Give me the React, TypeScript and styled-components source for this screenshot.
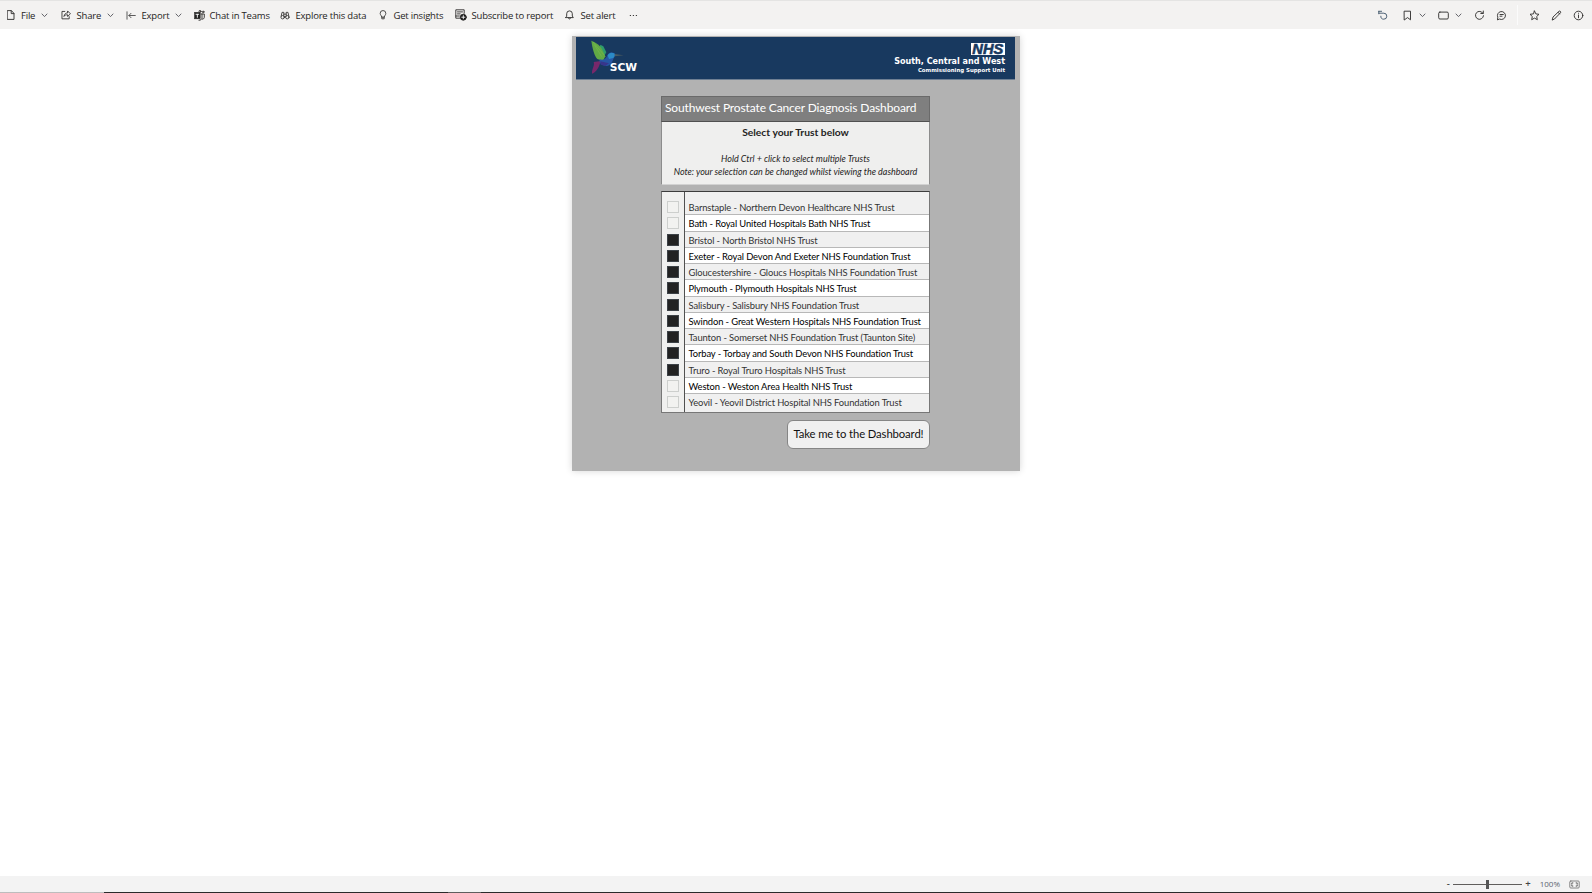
import React from 'react';
import styled, { createGlobalStyle, css } from 'styled-components';

const GlobalStyle = createGlobalStyle`
  * { box-sizing: border-box; }
  html, body { margin: 0; padding: 0; }
  body { background: #fff; color: #252423; overflow: hidden; }
`;

const ui = css`
  font-family: 'Open Sans', 'Noto Sans', sans-serif;
  font-size: 9.5px;
  letter-spacing: -0.2px;
`;

const Page = styled.div`
  width: 100%;
  height: 100vh;
  display: flex;
  flex-direction: column;
`;

const Toolbar = styled.header`
  ${ui}
  flex: none;
  height: 29px;
  display: flex;
  align-items: center;
  padding: 0 8px 0 6.5px;
  background: #f3f2f1;
  border-top: 1px solid #e4e4e3;
`;

const ToolButton = styled.button<{ $width: number; $gap: number }>`
  all: unset;
  width: ${(p) => p.$width}px;
  height: 26px;
  flex: none;
  display: grid;
  grid-template-columns: ${(p) => p.$gap}px max-content max-content;
  align-items: center;
  white-space: nowrap;
  color: #252423;
`;

const Glyph = styled.svg<{ $w?: number; $h?: number }>`
  display: block;
  width: ${(p) => p.$w ?? 11}px;
  height: ${(p) => p.$h ?? 11}px;
  fill: none;
  stroke: #2b2a29;
  stroke-width: 0.9;
  stroke-linecap: round;
  stroke-linejoin: round;
`;

const ChevronGlyph = styled(Glyph)`
  stroke: #55565c;
`;

const Actions = styled.div`
  margin-left: auto;
  display: flex;
  align-items: center;
`;

const ActionButton = styled.button<{ $before: number }>`
  all: unset;
  margin-left: ${(p) => p.$before}px;
`;

const Divider = styled.span`
  width: 1px;
  height: 20px;
  margin-left: 10.5px;
  background: #fbfbfb;
`;

const Canvas = styled.main`
  flex: 1;
  display: flex;
  justify-content: center;
  align-items: flex-start;
  padding: 7px 0 0;
`;

const Report = styled.section`
  width: 448px;
  height: 435px;
  display: flex;
  flex-direction: column;
  padding: 1px 5px 0 4px;
  background: #b2b2b2;
  box-shadow: 0 0 7px rgba(0, 0, 0, 0.16);
  font-family: Lato, 'Open Sans', sans-serif;
`;

const Banner = styled.div`
  height: 43px;
  display: flex;
  justify-content: space-between;
  padding: 3px 10px 0 14.5px;
  background: #18395f;
  border-bottom: 1px solid #6e7f93;
  color: #fff;
`;

const ScwLogo = styled.div`
  display: flex;
  align-items: flex-start;
`;

const ScwText = styled.span`
  margin: 21px 0 0 -14px;
  font: bold 10.7px/14px 'DejaVu Sans', sans-serif;
`;

const NhsLogo = styled.div`
  display: flex;
  flex-direction: column;
  align-items: flex-end;
  font-family: 'DejaVu Sans', sans-serif;
  font-weight: bold;
  white-space: nowrap;
`;

const NhsMark = styled.span`
  width: 34.5px;
  height: 12px;
  margin-top: 3px;
  display: flex;
  align-items: center;
  justify-content: center;
  background: #fff;
  color: #18395f;
  font: italic bold 14.6px/12px 'Liberation Sans', Arial, sans-serif;
  -webkit-text-stroke: 0.6px #18395f;
`;

const NhsRegion = styled.span`
  margin-top: 2px;
  font-size: 8.06px;
  line-height: 10px;
`;

const NhsUnit = styled.span`
  font-size: 5.42px;
  line-height: 7px;
`;

const Content = styled.div`
  width: 269px;
  margin: 16px 0 0 85px;
  display: flex;
  flex-direction: column;
`;

const Title = styled.h1`
  margin: 0;
  height: 26px;
  padding-left: 3px;
  border: 1px solid #6a6a6a;
  border-bottom-color: #505050;
  background: #7f7f7f;
  color: #fff;
  font-size: 12px;
  font-weight: 400;
  line-height: 22px;
  letter-spacing: -0.13px;
  white-space: nowrap;
`;

const Intro = styled.div`
  height: 63px;
  padding-top: 4px;
  border: solid #8c8c8c;
  border-width: 0 1px 1px;
  border-bottom-color: #d2d2d2;
  background: #efefee;
  text-align: center;
  line-height: 13px;
`;

const IntroHeading = styled.p`
  margin: 0 0 13px;
  font-size: 10.3px;
  font-weight: 700;
`;

const IntroNote = styled.p`
  margin: 0;
  font-size: 8.97px;
  font-style: italic;
`;

const TrustList = styled.ul`
  list-style: none;
  height: 222px;
  margin: 6px 0 0;
  padding: 0;
  display: flex;
  flex-direction: column;
  border: 1px solid #777;
  border-top-color: #3c3c3c;
  background: linear-gradient(to right, #f0f0ef 22px, #505050 22px, #505050 23px, #f0f0f0 23px);
  padding-top: 7px;
`;

const TrustRow = styled.li`
  height: 16.27px;
  flex: none;
  display: flex;
  &:last-child > span { border-bottom: 0; }
`;

const CheckBox = styled.i<{ $on: boolean }>`
  flex: none;
  width: 12px;
  height: 12px;
  margin: 2px 6px 0 5px;
  border: 1px solid ${(p) => (p.$on ? '#3d4247' : '#cdcfcd')};
  background: ${(p) => (p.$on ? '#222' : '#f2f2f0')};
`;

const TrustName = styled.span<{ $alt: boolean }>`
  flex: 1;
  height: 16.27px;
  padding: 1px 0 0 3.5px;
  border-bottom: 1px solid #b8b8b8;
  background: ${(p) => (p.$alt ? '#fff' : '#f0f0f0')};
  color: ${(p) => (p.$alt ? '#000' : '#333')};
  font-size: 9.4px;
  line-height: 15px;
  letter-spacing: -0.11px;
  white-space: nowrap;
`;

const GoButton = styled.button`
  align-self: flex-end;
  width: 143px;
  height: 29px;
  margin-top: 7px;
  padding: 0 0 2px;
  border: 1px solid #858585;
  border-radius: 6px;
  background: #f0f0f0;
  color: #111;
  font: 11.3px/25px Lato, sans-serif;
  letter-spacing: -0.11px;
  white-space: nowrap;
`;

const StatusBar = styled.footer`
  flex: none;
  height: 17px;
  display: flex;
  flex-direction: column;
  background: #f3f3f3;
`;

const ZoomControls = styled.div`
  flex: 1;
  display: flex;
  align-items: center;
  justify-content: flex-end;
  padding-right: 12px;
  font: 8px/12px 'Open Sans', sans-serif;
  color: #5b6470;
`;

const ZoomSign = styled.span`
  font-size: 9.5px;
  font-weight: 600;
  color: #444;
`;

const ZoomTrack = styled.div`
  width: 69px;
  height: 9px;
  margin: 0 3.5px 0 3px;
  display: grid;
  place-items: center;
  background: linear-gradient(#605e5c, #605e5c) center / 100% 1px no-repeat;
`;

const ZoomThumb = styled.i`
  width: 3px;
  height: 9px;
  background: #555;
`;

const ZoomValue = styled.span`
  margin: 0 9px 0 9px;
`;

const BottomEdge = styled.div`
  height: 1px;
  background: linear-gradient(to right, #bdbdbd 104px, #2b2b2b 104px, #2b2b2b 448px, #5e5e5e 448px, #5e5e5e 481px, #2b2b2b 481px);
`;

const Chevron = () => (
  <ChevronGlyph viewBox="0 0 7 5" $w={7} $h={5}><path d="M1 1l2.5 2.6L6 1" /></ChevronGlyph>
);

const FileIcon = () => (
  <Glyph viewBox="0 0 8 10" $w={8} $h={10}><path d="M.6.6h3.8l2.6 2.8v6H.6zM4.2.8v2.8h2.6" /></Glyph>
);
const ShareIcon = () => (
  <Glyph viewBox="0 0 11 10" $w={10.5} $h={9.5}><path d="M4 1.5H1v7.8h7.600V7M3.200 6.400c.4-2.300 1.800-3.300 3.700-3.300V1l3 3-3 2.800V5c-1.600 0-2.700.3-3.700 1.400z" /></Glyph>
);
const ExportIcon = () => (
  <Glyph viewBox="0 0 10 9" $w={10} $h={9}><path d="M1 .8v7.400M9.300 4.500H3M5 2.300L2.900 4.500 5 6.700" stroke="#4a4a4a" /></Glyph>
);
const TeamsIcon = () => (
  <Glyph viewBox="0 0 11 11" $w={11} $h={11}>
    <path d="M.5 2.600h5.600v6H.5z" fill="#222" />
    <path d="M2 4.300h2.700M3.350 4.300v3" stroke="#fff" />
    <circle cx="6" cy="1.400" r="1" /><circle cx="9.200" cy="1.900" r=".8" />
    <path d="M7 4h3.300v3.300c0 1.200-1 1.900-2 1.900M8 4v4c0 1.300-1.300 2.300-3 2.300" />
  </Glyph>
);
const BinocularsIcon = () => (
  <Glyph viewBox="0 0 10 10" $w={10} $h={9}>
    <circle cx="2.400" cy="6.900" r="1.900" /><circle cx="7.600" cy="6.900" r="1.900" />
    <path d="M.8 5.500L1.700 1.500h2v4M9.200 5.500l-.9-4h-2v4M3.700 3.500h2.600M4.300 6.500h1.400" />
  </Glyph>
);
const BulbIcon = () => (
  <Glyph viewBox="0 0 8 11" $w={8} $h={10}><path d="M2.600 7.500C2.400 6 .9 5.500.9 3.700a3.100 3.100 0 016.200 0c0 1.800-1.500 2.300-1.700 3.800zM2.700 7.500v2.200h2.600V7.500" /></Glyph>
);
const SubscribeIcon = () => (
  <Glyph viewBox="0 0 12 12" $w={12} $h={12}>
    <path d="M4.600 9.200H.8V.8h8.400v3.500M.8 7h3.600M2.500 2.900h5M2.500 4.900h2.700" />
    <circle cx="8.300" cy="8.200" r="3" fill="#111" />
    <path d="M8.300 6.600v3.200M6.700 8.200h3.200" stroke="#fff" />
  </Glyph>
);
const BellIcon = () => (
  <Glyph viewBox="0 0 9 10" $w={9} $h={10}><path d="M.7 7.600h7.600L7.300 6V3.700a2.800 2.800 0 00-5.600 0V6zM3.400 8c.2 1.400 2 1.400 2.200 0" /></Glyph>
);
const DotsIcon = () => (
  <Glyph viewBox="0 0 9 3" $w={9} $h={3}><path d="M1.300 1.500h.2M4.300 1.500h.2M7.300 1.500h.2" strokeWidth="1.200" /></Glyph>
);

const UndoIcon = () => (
  <Glyph viewBox="0 0 11 11"><path d="M1.800 1.300h2.800M1.800 1.300v2.500M2 3.200h4.800a3 3 0 010 6c-2.200 0-3.200-1.400-3-3" stroke="#3c5268" /></Glyph>
);
const BookmarkIcon = () => (
  <Glyph viewBox="0 0 11 11"><path d="M2.500 1.200h6v8.600l-3-2.200-3 2.200z" /></Glyph>
);
const ViewIcon = () => (
  <Glyph viewBox="0 0 11 11"><rect x=".7" y="2.100" width="9.600" height="6.900" rx="1.200" /></Glyph>
);
const RefreshIcon = () => (
  <Glyph viewBox="0 0 11 11"><path d="M8.900 3.200A4 4 0 109.500 5.700M9.300 1v2.500H6.800" /></Glyph>
);
const CommentIcon = () => (
  <Glyph viewBox="0 0 11 11"><path d="M1.500 9.500l.3-2.300A4 4 0 113.800 9.200zM4 4.500h3.300M4 6.200h2" /></Glyph>
);
const StarIcon = () => (
  <Glyph viewBox="0 0 11 11"><path d="M5.500 1l1.350 2.900 3.150.4-2.300 2.200.6 3.200-2.800-1.600-2.800 1.600.6-3.200L1 4.300l3.150-.4z" /></Glyph>
);
const PencilIcon = () => (
  <Glyph viewBox="0 0 11 11"><path d="M1.300 9.700l.7-2.700L8 1.300c.9-.8 2.300.5 1.500 1.500L3.700 8.800zM7 2.300l1.600 1.600" /></Glyph>
);
const InfoIcon = () => (
  <Glyph viewBox="0 0 11 11"><circle cx="5.500" cy="5.500" r="4.300" /><path d="M5.500 5v2.800M5.500 3.200v.1" /></Glyph>
);
const FitIcon = () => (
  <Glyph viewBox="0 0 11 9" $w={11} $h={9}><rect x=".8" y="1" width="9.400" height="7" rx="1" stroke="#777" /><path d="M2.800 4V2.900h1.100M7.100 2.900h1.100V4M8.200 5v1.100H7.100M3.900 6.100H2.800V5" stroke="#555" /></Glyph>
);

const BirdArt = styled.svg`
  width: 33.3px;
  height: 35px;
`;

const Hummingbird = () => (
  <BirdArt viewBox="78 31 100 105">
    <path d="M103 62l3-17 9 5 9 18-8 14z" fill="#2f9c6b" />
    <path d="M79 33c13 5 27 14 33 27l9 20-7 14-17-6c-9-9-15-33-18-55z" fill="#62a945" />
    <path d="M88 45l22 36M84 37l34 40" stroke="#7fbf4c" strokeWidth="1.500" fill="none" />
    <path d="M108 94L86 97c4 11-6 20-5 35 10-2 18-14 22-25z" fill="#78286b" />
    <path d="M104 89c11 4 19-1 24-14 6-10 22-7 23 0-2 8-5 9-8 18-5 13-16 19-28 14-8-3-13-8-11-18z" fill="#2656a3" />
    <path d="M128 77c5-10 19-10 23-1l-6 9-13 3z" fill="#2b8ac6" />
    <path d="M106 95l26 6-11 8-14-4z" fill="#38358b" />
    <path d="M149 73l27 4-27 3z" fill="#4b5b62" />
  </BirdArt>
);

const tools = [
  { label: 'File', Icon: FileIcon, width: 54.5, gap: 14.5, menu: true },
  { label: 'Share', Icon: ShareIcon, width: 64.5, gap: 15.5, menu: true },
  { label: 'Export', Icon: ExportIcon, width: 68, gap: 16, menu: true },
  { label: 'Chat in Teams', Icon: TeamsIcon, width: 86, gap: 16 },
  { label: 'Explore this data', Icon: BinocularsIcon, width: 99, gap: 16 },
  { label: 'Get insights', Icon: BulbIcon, width: 76.5, gap: 15 },
  { label: 'Subscribe to report', Icon: SubscribeIcon, width: 110, gap: 16.5 },
  { label: 'Set alert', Icon: BellIcon, width: 64, gap: 15.5 },
  { label: '', Icon: DotsIcon, width: 20, gap: 10 },
];

const actions = [
  { name: 'Reset', Icon: UndoIcon, before: 0 },
  { name: 'Bookmarks', Icon: BookmarkIcon, before: 14 },
  { name: 'Bookmarks menu', Icon: Chevron, before: 6 },
  { name: 'View', Icon: ViewIcon, before: 11.5 },
  { name: 'View menu', Icon: Chevron, before: 6.5 },
  { name: 'Refresh', Icon: RefreshIcon, before: 11.5 },
  { name: 'Comments', Icon: CommentIcon, before: 11 },
];

const pageActions = [
  { name: 'Favourite', Icon: StarIcon },
  { name: 'Edit', Icon: PencilIcon },
  { name: 'Details', Icon: InfoIcon },
];

const trusts: [string, boolean][] = [
  ['Barnstaple - Northern Devon Healthcare NHS Trust', false],
  ['Bath - Royal United Hospitals Bath NHS Trust', false],
  ['Bristol - North Bristol NHS Trust', true],
  ['Exeter - Royal Devon And Exeter NHS Foundation Trust', true],
  ['Gloucestershire - Gloucs Hospitals NHS Foundation Trust', true],
  ['Plymouth - Plymouth Hospitals NHS Trust', true],
  ['Salisbury - Salisbury NHS Foundation Trust', true],
  ['Swindon - Great Western Hospitals NHS Foundation Trust', true],
  ['Taunton - Somerset NHS Foundation Trust (Taunton Site)', true],
  ['Torbay - Torbay and South Devon NHS Foundation Trust', true],
  ['Truro - Royal Truro Hospitals NHS Trust', true],
  ['Weston - Weston Area Health NHS Trust', false],
  ['Yeovil - Yeovil District Hospital NHS Foundation Trust', false],
];

const MenuMark = styled.span`
  margin-left: 6px;
`;

export default function App() {
  return (
    <Page>
      <GlobalStyle />
      <Toolbar>
        {tools.map(({ label, Icon, width, gap, menu }) => (
          <ToolButton key={label} $width={width} $gap={gap}>
            <Icon />
            <span>{label}</span>
            {menu && <MenuMark><Chevron /></MenuMark>}
          </ToolButton>
        ))}
        <Actions>
          {actions.map(({ name, Icon, before }) => (
            <ActionButton key={name} $before={before}><Icon /></ActionButton>
          ))}
          <Divider />
          {pageActions.map(({ name, Icon }) => (
            <ActionButton key={name} $before={11}><Icon /></ActionButton>
          ))}
        </Actions>
      </Toolbar>
      <Canvas>
        <Report>
          <Banner>
            <ScwLogo>
              <Hummingbird />
              <ScwText>SCW</ScwText>
            </ScwLogo>
            <NhsLogo>
              <NhsMark>NHS</NhsMark>
              <NhsRegion>South, Central and West</NhsRegion>
              <NhsUnit>Commissioning Support Unit</NhsUnit>
            </NhsLogo>
          </Banner>
          <Content>
            <Title>Southwest Prostate Cancer Diagnosis Dashboard</Title>
            <Intro>
              <IntroHeading>Select your Trust below</IntroHeading>
              <IntroNote>Hold Ctrl + click to select multiple Trusts</IntroNote>
              <IntroNote>Note: your selection can be changed whilst viewing the dashboard</IntroNote>
            </Intro>
            <TrustList>
              {trusts.map(([name, on], i) => (
                <TrustRow key={name}>
                  <CheckBox $on={on} />
                  <TrustName $alt={i % 2 === 1}>{name}</TrustName>
                </TrustRow>
              ))}
            </TrustList>
            <GoButton>Take me to the Dashboard!</GoButton>
          </Content>
        </Report>
      </Canvas>
      <StatusBar>
        <ZoomControls>
          <ZoomSign>-</ZoomSign>
          <ZoomTrack><ZoomThumb /></ZoomTrack>
          <ZoomSign>+</ZoomSign>
          <ZoomValue>100%</ZoomValue>
          <FitIcon />
        </ZoomControls>
        <BottomEdge />
      </StatusBar>
    </Page>
  );
}
